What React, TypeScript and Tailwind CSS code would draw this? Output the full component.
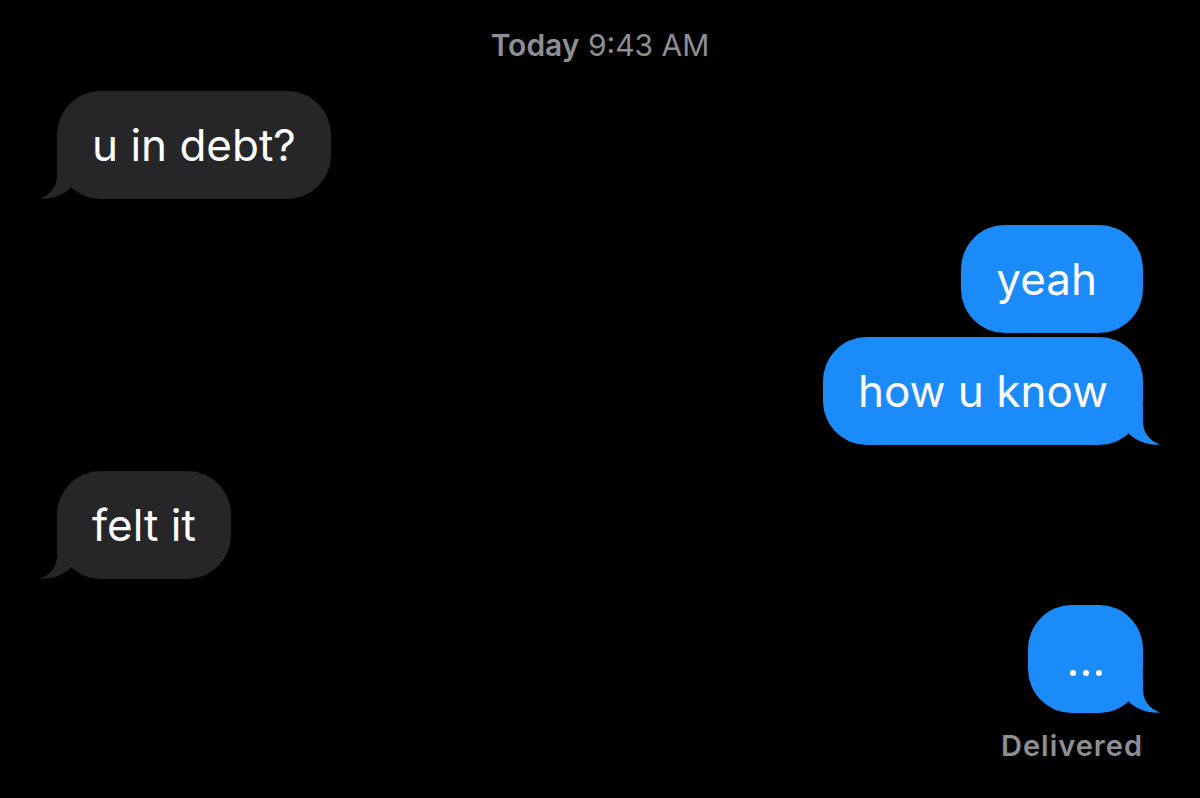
import React from "react";

const GRAY = "#262628";
const BLUE = "#1b8bfa";

function Tail({ side, color }: { side: "left" | "right"; color: string }) {
  return (
    <svg
      width="40"
      height="40"
      viewBox="0 0 40 40"
      className={
        side === "left"
          ? "absolute bottom-0 left-[-20px]"
          : "absolute bottom-0 right-[-20px] scale-x-[-1]"
      }
    >
      <path d="M20 0 L20 16 C20 28 14 35 3 39.6 C14 40.4 25 37 34 29 L34 0 Z" fill={color} />
    </svg>
  );
}

function Bubble({
  text,
  sent,
  tail,
  wide,
}: {
  text: React.ReactNode;
  sent?: boolean;
  tail?: boolean;
  wide?: boolean;
}) {
  const color = sent ? BLUE : GRAY;
  return (
    <div className={sent ? "flex justify-end" : "flex justify-start"}>
      <div
        className={
          "relative rounded-[44px] py-[26px] pl-[35px] text-[44px] leading-[56px] text-white " +
          (wide ? "pr-[46px]" : "pr-[35px]")
        }
        style={{ backgroundColor: color }}
      >
        {tail && <Tail side={sent ? "right" : "left"} color={color} />}
        <span className="relative">{text}</span>
      </div>
    </div>
  );
}

export default function App() {
  return (
    <div
      className="flex h-[798px] w-[1200px] flex-col overflow-hidden bg-black px-[57px]"
      style={{ fontFamily: "Inter, 'Liberation Sans', sans-serif" }}
    >
      <div className="pt-[27px] text-center text-[30px] leading-[36px] text-[#8e8e93]">
        <span className="font-semibold">Today</span> 9:43 AM
      </div>

      <div className="mt-[28px] flex flex-col">
        <Bubble text="u in debt?" tail />
        <div className="mt-[26px]">
          <Bubble text="yeah" sent wide />
        </div>
        <div className="mt-[4px]">
          <Bubble text="how u know" sent tail />
        </div>
        <div className="mt-[26px]">
          <Bubble text="felt it" tail />
        </div>
        <div className="mt-[26px] flex justify-end">
          <div
            className="relative flex h-[108px] w-[115px] items-center justify-center gap-[7px] rounded-[44px]"
            style={{ backgroundColor: BLUE }}
          >
            <Tail side="right" color={BLUE} />
            <span className="relative mt-[28px] h-[6px] w-[6px] rounded-full bg-white" />
            <span className="relative mt-[28px] h-[6px] w-[6px] rounded-full bg-white" />
            <span className="relative mt-[28px] h-[6px] w-[6px] rounded-full bg-white" />
          </div>
        </div>
        <div className="mt-[16px] text-right text-[29px] font-semibold leading-[34px] tracking-[1px] text-[#8e8e93]">
          Delivered
        </div>
      </div>
    </div>
  );
}
